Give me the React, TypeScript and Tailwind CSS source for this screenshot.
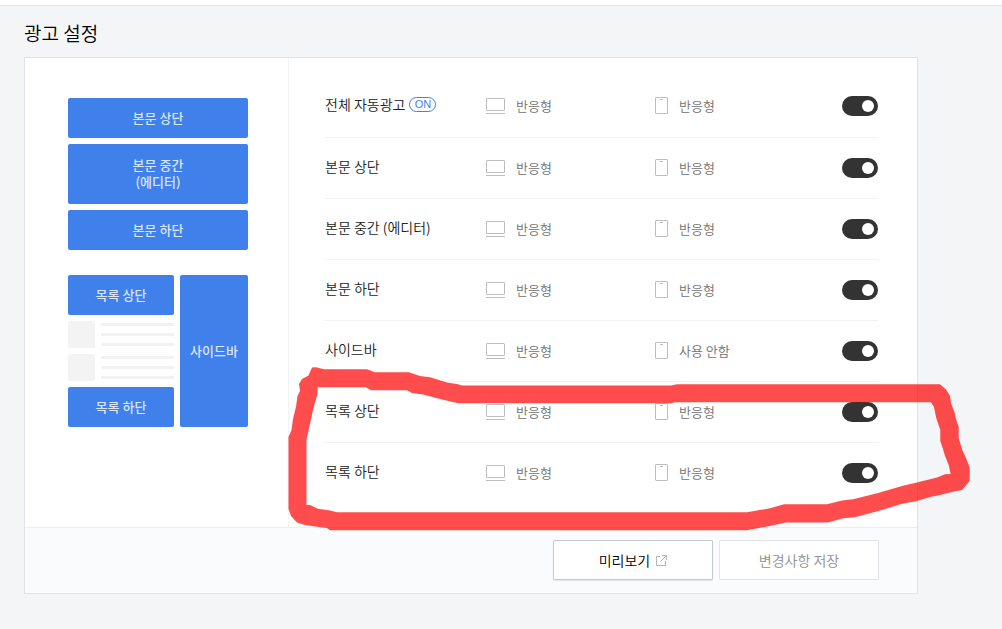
import { useState } from 'react'

type Slot = {
  id: string
  label: string
  badge?: string
  desktop: string
  mobile: string
}

const slots: Slot[] = [
  { id: 'all', label: '전체 자동광고', badge: 'ON', desktop: '반응형', mobile: '반응형' },
  { id: 'body-top', label: '본문 상단', desktop: '반응형', mobile: '반응형' },
  { id: 'body-middle', label: '본문 중간 (에디터)', desktop: '반응형', mobile: '반응형' },
  { id: 'body-bottom', label: '본문 하단', desktop: '반응형', mobile: '반응형' },
  { id: 'sidebar', label: '사이드바', desktop: '반응형', mobile: '사용 안함' },
  { id: 'list-top', label: '목록 상단', desktop: '반응형', mobile: '반응형' },
  { id: 'list-bottom', label: '목록 하단', desktop: '반응형', mobile: '반응형' },
]

function DesktopIcon() {
  return (
    <svg className="h-4 w-[19px] shrink-0" viewBox="0 0 19 16" fill="none" stroke="#bdbdbd" aria-hidden="true">
      <rect x="0.5" y="0.5" width="18" height="12" rx="0.5" />
      <path d="M0 15.5h19" />
    </svg>
  )
}

function MobileIcon() {
  return (
    <svg className="h-[19px] w-[13px] shrink-0" viewBox="0 0 13 19" fill="none" stroke="#bdbdbd" aria-hidden="true">
      <rect x="0.5" y="0.5" width="12" height="16" rx="0.5" />
      <path d="M5 2.5h3" />
    </svg>
  )
}

function ExternalIcon() {
  return (
    <svg className="h-[11px] w-[11px]" viewBox="0 0 11 11" fill="none" stroke="#b5b5b5" aria-hidden="true">
      <path d="M4 1.5H0.5v9h9V6M6 0.5h4.5V5M10.5 0.5L4.5 6.5" />
    </svg>
  )
}

function Block({ children, className }: { children: React.ReactNode; className: string }) {
  return (
    <div
      className={`flex items-center justify-center rounded-xs bg-[#3f80ea] pb-0.5 text-center text-[13px] leading-[17px] font-medium text-white/80 ${className}`}
    >
      {children}
    </div>
  )
}

function ListItem() {
  return (
    <div className="flex gap-1.5">
      <div className="size-[27px] rounded-xs bg-[#f3f3f3]" />
      <div className="flex flex-1 flex-col gap-[7px] pt-0.5">
        <div className="h-[3px] bg-[#f2f2f2]" />
        <div className="h-[3px] bg-[#f2f2f2]" />
        <div className="h-[3px] bg-[#f2f2f2]" />
      </div>
    </div>
  )
}

function LayoutPreview() {
  return (
    <div className="w-[264px] shrink-0 border-r border-[#f1f2f4] pt-10 pr-10 pl-[43px]">
      <div className="flex flex-col gap-1.5">
        <Block className="h-10">본문 상단</Block>
        <Block className="h-15">
          본문 중간
          <br />
          (에디터)
        </Block>
        <Block className="h-10">본문 하단</Block>
      </div>
      <div className="mt-[25px] flex gap-1.5">
        <div className="flex flex-1 flex-col gap-1.5">
          <Block className="h-10">목록 상단</Block>
          <ListItem />
          <ListItem />
          <Block className="h-10">목록 하단</Block>
        </div>
        <Block className="w-[68px]">사이드바</Block>
      </div>
    </div>
  )
}

function SlotRow({ slot, checked, onToggle }: { slot: Slot; checked: boolean; onToggle: () => void }) {
  return (
    <li className="border-b border-[#f2f2f2] first:pb-px last:border-b-0">
      <div className="grid h-15 grid-cols-[162px_169px_1fr_auto] items-center">
        <label htmlFor={slot.id} className="flex items-center gap-1 pb-1 pl-px text-sm text-[#222]">
          {slot.label}
          {slot.badge && (
            <span className="flex h-[15px] w-[27px] items-center justify-center rounded-full border border-[#3f80ea] pt-px font-['Liberation_Sans',sans-serif] text-[11px] leading-none font-normal text-[#3f80ea]">
              {slot.badge}
            </span>
          )}
        </label>
        <span className="flex items-center gap-[11px] text-[13px] text-[#707070]">
          <DesktopIcon />
          {slot.desktop}
        </span>
        <span className="flex items-center gap-[11px] text-[13px] text-[#707070]">
          <MobileIcon />
          {slot.mobile}
        </span>
        <input
          id={slot.id}
          type="checkbox"
          role="switch"
          checked={checked}
          onChange={onToggle}
          className="flex h-5 w-9 cursor-pointer appearance-none items-center rounded-full bg-[#ccc] px-1 before:size-3 before:rounded-full before:bg-white checked:justify-end checked:bg-[#333]"
        />
      </div>
    </li>
  )
}

function MarkerStroke() {
  return (
    <svg
      className="pointer-events-none absolute top-0 left-0 h-[629px] w-[1002px] max-w-none"
      viewBox="0 0 1002 629"
      aria-hidden="true"
    >
      <path
        fill="#ff0000"
        fillOpacity="0.7"
        fillRule="evenodd"
        d="M312 367.5L316 367.3L324 369.3H367L375 372.3H409L420 376L430 377.3L447 382.5L458 384.3L462 385.5H671L677 384.3H940L946 389.5L950 396L951 403L954.7 413L956 419L958.7 427V438L962.3 450L966 458L969.7 467.7V481L962 490L955 491.3L940 495L930 497L915 501.5L903 503.5L880 510.5L855 517.3L843 518.3L828 522.4H786L770 526L747 530.3H330L327 528L317 526.7L305 525L297 522.5L291 516L288.5 509V437L291.5 430L293 419L296 406.7L297.5 396L300 391L299 384L302 379L308.5 375.5Z
        M317.7 387.3H366L371 390.3H407L412 393L423 394.5L440 399L458 403.3H671.5L675 402.3H931L934 407L936.3 418.3L940.3 430V441L943 449L944.7 455L948.7 465L950.7 474L945 474.3L937 477.5L920 481.7L903 485.7L878 493L853 499.3L842 500.5L827 504.3H784L770 508.3L747 512.3H337L330 510.5L318 508.7L310 505H306.5V440L309.3 427L313.5 408L315.5 401L317.3 395Z"
      />
    </svg>
  )
}

export default function App() {
  const [enabled, setEnabled] = useState<Record<string, boolean>>(() =>
    Object.fromEntries(slots.map((slot) => [slot.id, true])),
  )

  return (
    <div className="relative min-h-screen overflow-hidden bg-[#f3f5f7] font-['Noto_Sans_CJK_KR',sans-serif] font-[350]">
      <header className="h-1.5 border-b border-[#e1e3e8] bg-white" />
      <main className="px-6 pt-3">
        <h1 className="text-[19px] leading-[30px] text-black">광고 설정</h1>
        <section className="mt-[9px] w-full max-w-[894px] border border-[#e0e3e8] bg-white">
          <div className="flex">
            <LayoutPreview />
            <ul className="flex-1 pt-[18px] pr-[39px] pb-6 pl-[35px]">
              {slots.map((slot) => (
                <SlotRow
                  key={slot.id}
                  slot={slot}
                  checked={enabled[slot.id]}
                  onToggle={() => setEnabled((prev) => ({ ...prev, [slot.id]: !prev[slot.id] }))}
                />
              ))}
            </ul>
          </div>
          <div className="flex justify-end gap-1.5 border-t border-[#eceef2] bg-[#fafbfd] pt-3 pr-[38px] pb-[13px]">
            <button
              type="button"
              className="flex h-10 w-40 items-center justify-center gap-1.5 rounded-[1px] border border-[#c3cad2] bg-white text-sm text-black shadow-[0_1px_1px_rgba(0,0,0,0.08)]"
            >
              미리보기
              <ExternalIcon />
            </button>
            <button
              type="button"
              className="h-10 w-40 rounded-[1px] border border-[#e0e3ea] bg-white text-sm text-[#909090]"
            >
              변경사항 저장
            </button>
          </div>
        </section>
      </main>
      <MarkerStroke />
    </div>
  )
}
